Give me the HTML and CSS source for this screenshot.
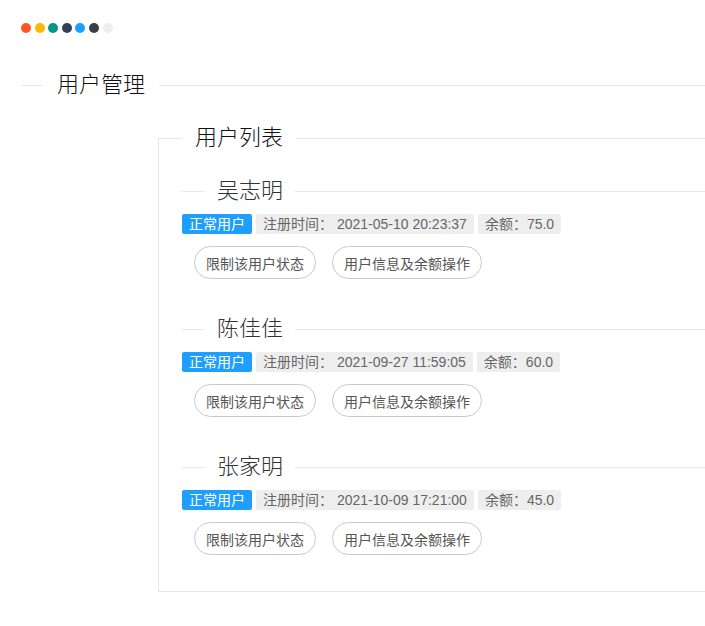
FILE: index.html
```html
<!DOCTYPE html>
<html lang="zh-CN">
<head>
<meta charset="utf-8">
<title>用户管理</title>
<link rel="stylesheet" href="styles.css">
</head>
<body>
<div class="page">
  <div class="dots">
    <span class="dot d1"></span><span class="dot d2"></span><span class="dot d3"></span><span class="dot d4"></span><span class="dot d5"></span><span class="dot d6"></span><span class="dot d7"></span>
  </div>
  <fieldset class="field-title">
    <legend>用户管理</legend>
    <fieldset class="list-box">
      <legend>用户列表</legend>
      <div class="user">
        <fieldset class="user-title"><legend>吴志明</legend></fieldset>
        <div class="tags">
          <span class="tag tag-blue">正常用户</span>
          <span class="tag">注册时间： 2021-05-10 20:23:37</span>
          <span class="tag">余额：75.0</span>
        </div>
        <div class="actions">
          <button class="btn">限制该用户状态</button>
          <button class="btn">用户信息及余额操作</button>
        </div>
      </div>
      <div class="user">
        <fieldset class="user-title"><legend>陈佳佳</legend></fieldset>
        <div class="tags">
          <span class="tag tag-blue">正常用户</span>
          <span class="tag">注册时间： 2021-09-27 11:59:05</span>
          <span class="tag">余额：60.0</span>
        </div>
        <div class="actions">
          <button class="btn">限制该用户状态</button>
          <button class="btn">用户信息及余额操作</button>
        </div>
      </div>
      <div class="user">
        <fieldset class="user-title"><legend>张家明</legend></fieldset>
        <div class="tags">
          <span class="tag tag-blue">正常用户</span>
          <span class="tag">注册时间： 2021-10-09 17:21:00</span>
          <span class="tag">余额：45.0</span>
        </div>
        <div class="actions">
          <button class="btn">限制该用户状态</button>
          <button class="btn">用户信息及余额操作</button>
        </div>
      </div>
    </fieldset>
  </fieldset>
</div>
</body>
</html>
```

FILE: styles.css
```css
html, body {
  margin: 0;
  padding: 0;
  overflow: hidden;
  background: #fff;
}
body {
  font-family: "Liberation Sans", "Noto Sans CJK SC", sans-serif;
  color: #333;
  font-size: 14px;
}
.page {
  width: 1000px;
  padding: 23px 0 0 21px;
}
.dots {
  display: flex;
  gap: 3.6px;
  height: 10px;
}
.dot {
  width: 10px;
  height: 10px;
  border-radius: 50%;
}
.d1 { background: #FF5722; }
.d2 { background: #FFB800; }
.d3 { background: #009688; }
.d4 { background: #2F4056; }
.d5 { background: #1E9FFF; }
.d6 { background: #393D49; }
.d7 { background: #eeeeee; }

fieldset {
  margin: 0;
  min-width: 0;
  padding: 0;
}
legend {
  font-size: 22px;
  line-height: 30px;
  font-weight: 300;
}
.field-title {
  margin-top: 37px;
  border: 0;
  border-top: 1px solid #e8e8e8;
  padding: 23px 0 0 0;
}
.field-title > legend {
  margin-left: 22px;
  padding: 0 14px;
  color: #111;
}
.list-box {
  margin-left: 137px;
  border: 1px solid #e6e6e6;
  padding: 23px 0 36px 23px;
}
.list-box > legend {
  margin-left: 0;
  padding: 0 13px;
  color: #111;
}
.user + .user {
  margin-top: 35px;
}
.user-title {
  border: 0;
  border-top: 1px solid #e8e8e8;
  padding: 0;
}
.user-title > legend {
  margin-left: 23px;
  padding: 0 12px;
  color: #333;
}
.tags {
  margin-top: 8px;
  display: flex;
  gap: 4px;
}
.tag {
  height: 20px;
  line-height: 20px;
  padding: 0 7px;
  font-size: 14px;
  border-radius: 2px;
  background: #eeeeee;
  color: #666;
  white-space: pre;
}
.tag-blue {
  background: #1E9FFF;
  color: #fff;
}
.actions {
  margin-top: 12px;
  padding-left: 12px;
  display: flex;
  gap: 16px;
}
.btn {
  box-sizing: border-box;
  height: 33px;
  padding: 0 11px;
  border: 1px solid #c9c9c9;
  border-radius: 17px;
  background: #fff;
  color: #555;
  font-family: inherit;
  font-size: 14px;
  cursor: pointer;
}
```
